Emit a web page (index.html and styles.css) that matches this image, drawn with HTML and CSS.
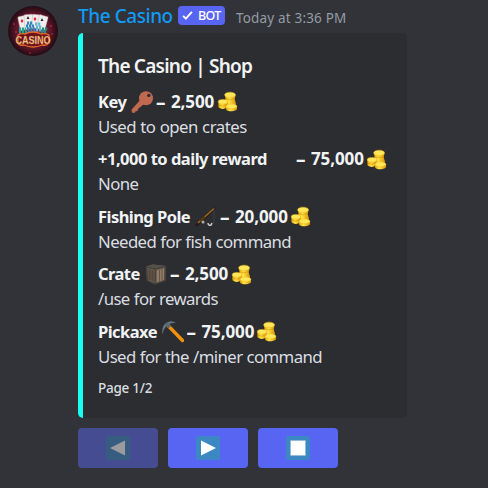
FILE: index.html
```
<!DOCTYPE html>
<html lang="en">
<head>
<meta charset="utf-8">
<title>The Casino</title>
<link rel="stylesheet" href="styles.css">
</head>
<body>
<svg class="defs" aria-hidden="true">
  <defs>
    <linearGradient id="gold" x1="0" x2="1">
      <stop offset="0" stop-color="#e7a900"/><stop offset=".4" stop-color="#ffe34c"/><stop offset="1" stop-color="#d99400"/>
    </linearGradient>
    <radialGradient id="red"><stop offset="0" stop-color="#94304a"/><stop offset=".65" stop-color="#64172c"/><stop offset="1" stop-color="#210b14"/></radialGradient>
    <symbol id="coins" viewBox="0 0 22 22">
      <g fill="url(#gold)">
        <path d="M8 4.500l1 3-.5 6c1 2 10 2 11.500 0l-1.500-5 1-4z"/>
        <path d="M1.500 11.500v5c1 3 8 3 9.500 0v-5z"/>
        <path d="M9.500 16v3c1 3 9 3 11.500 0v-3z"/>
      </g>
      <g fill="#ffe759" stroke="#eeb91c" stroke-width=".5">
        <ellipse cx="13.700" cy="4" rx="5.700" ry="2.800"/>
        <ellipse cx="6.200" cy="11.300" rx="4.900" ry="2.400"/>
        <ellipse cx="15.200" cy="16" rx="5.600" ry="2.500"/>
      </g>
      <path d="M9 8q5 2.500 9 0M2 14.700q4 2.500 8 0" fill="none" stroke="#d79a05" stroke-width=".7"/>
    </symbol>
  </defs>
</svg>
<main class="message">
  <svg class="avatar" viewBox="0 0 50 50">
    <circle cx="25" cy="25" r="25" fill="url(#red)"/>
    <g fill="#d33d51"><circle cx="6" cy="18" r=".8"/><circle cx="8" cy="26" r=".7"/><circle cx="43" cy="20" r=".8"/><circle cx="40" cy="10" r=".6"/><circle cx="22" cy="47" r=".7"/><circle cx="44" cy="28" r=".7"/></g>
    <g fill="#f3eeee" stroke="#b5a5aa" stroke-width=".4">
      <rect x="11" y="10" width="9" height="14" rx="1" transform="rotate(-12 15 17)"/>
      <rect x="16.500" y="8.500" width="9" height="14" rx="1" transform="rotate(-4 21 16)"/>
      <rect x="24" y="8.500" width="9" height="14" rx="1" transform="rotate(5 28 16)"/>
      <rect x="29.500" y="9.500" width="9" height="14" rx="1" transform="rotate(15 34 17)"/>
    </g>
    <path d="M14 13l1.500 2-1.500 2-1.500-2zM27 11l1.500 2-1.500 2-1.500-2z" fill="#dc2637"/>
    <path d="M20 10l1.500 3h-3zM34 12l1.500 3h-3z" fill="#292936"/>
    <g fill="none" stroke-width="2.800" stroke-dasharray="2.200 .8">
      <path d="M11 23h7M11 26h8" stroke="#21a58d"/><path d="M19 17h6M18 20h8M19 23h9M20 26h8" stroke="#3585bd"/><path d="M27 18h6M28 21h6M28 24h8" stroke="#69b7d2"/><path d="M34 23h6M33 26h6" stroke="#278a80"/>
    </g>
    <path d="M10 29q3-2 7-1 8-4 16 0 4-1 8 1v8q-2 3-7 2-9 4-18 0-5 1-6-2z" fill="#6b111b" stroke="#e36b29" stroke-width="1.300"/>
    <text class="logo-text" x="25" y="37.500" text-anchor="middle" textLength="35" lengthAdjust="spacingAndGlyphs">CASINO</text>
  </svg>
  <section class="content">
    <header class="byline">
      <span class="author">The Casino</span>
      <span class="badge"><svg viewBox="0 0 10 10"><path d="M1 5.300l2.500 2.500L9 1.800" fill="none" stroke="#fff" stroke-width="1.700"/></svg><span>BOT</span></span>
      <time>Today at 3:36 PM</time>
    </header>
    <article class="embed">
      <h1>The Casino | Shop</h1>
      <div class="field">
        <h2><span class="name key">Key</span>
          <svg class="emoji" viewBox="0 0 22 22"><circle cx="15" cy="7.300" r="7" fill="#c1694f"/><path d="M10 8l4 4-7 6-.500 2-2 .300-.500 1.500H1l-.500-3z" fill="#c1694f"/><circle cx="17.800" cy="4.400" r="1.700" fill="#2b2d31"/></svg>
          <span class="dash">–</span><span class="price small">2,500</span><svg class="coins"><use href="#coins"/></svg></h2>
        <p class="open">Used to open crates</p>
      </div>
      <div class="field">
        <h2><span class="name daily">+1,000 to daily reward</span><span class="emoji"></span><span class="dash">–</span><span class="price">75,000</span><svg class="coins"><use href="#coins"/></svg></h2>
        <p>None</p>
      </div>
      <div class="field">
        <h2><span class="name pole">Fishing Pole</span>
          <svg class="emoji" viewBox="0 0 22 22"><path d="M1 20L20 2" stroke="#2a1b14" stroke-width="2.500"/><path d="M3 17L19 2.500" stroke="#a16b20" stroke-width="1.500"/><path d="M5 15l5-4" stroke="#573617" stroke-width="2.500"/><path d="M19 2v12q0 5-3 5" fill="none" stroke="#4b4f54" stroke-width=".6"/><path d="M13 17q0 3 3 2l1-2" fill="none" stroke="#d2d5d7" stroke-width="1.400"/><circle cx="8" cy="16" r="1.600" fill="#aaa9a5"/></svg>
          <span class="dash">–</span><span class="price">20,000</span><svg class="coins"><use href="#coins"/></svg></h2>
        <p>Needed for fish command</p>
      </div>
      <div class="field">
        <h2><span class="name crate">Crate</span>
          <svg class="emoji" viewBox="0 0 22 22"><path d="M1 3.500L8 1.500l13 1.500-.700 14.500L10 21l-8-3.500z" fill="#6f5f50"/><path d="M1 3.500L8 1.500l13 1.500-10.500 2.500z" fill="#55514b"/><path d="M2.500 6l7 1.500V19L3 16.500z" fill="#5f5144"/><path d="M12 7.500L19 5.500v11L12 19z" fill="#927b65"/><path d="M5 6v11M7.500 7v11M14.500 7v11M17 6v11" stroke="#4d443c" stroke-width=".7"/><path d="M1.500 4L2.500 17.500 10 21l10-3.500L20.500 3.500 10.500 6zM10.500 6L10 20.500" fill="none" stroke="#44413e" stroke-width="1.300"/></svg>
          <span class="dash">–</span><span class="price small">2,500</span><svg class="coins"><use href="#coins"/></svg></h2>
        <p>/use for rewards</p>
      </div>
      <div class="field">
        <h2><span class="name pick">Pickaxe</span>
          <svg class="emoji" viewBox="0 0 22 22"><path d="M6 4.500L20.500 19.500" stroke="#f4900c" stroke-width="3.400" stroke-linecap="round"/><path d="M.500 13.500Q-.500 5 4 2 9-1.500 14 1.800 7 2 4 5.500 1 9 .500 13.500z" fill="#66757f"/><path d="M3.500 3.500l2-2 3.500 3.500-2.500 2.500z" fill="#546875"/></svg>
          <span class="dash">–</span><span class="price">75,000</span><svg class="coins"><use href="#coins"/></svg></h2>
        <p>Used for the /miner command</p>
      </div>
      <footer>Page 1/2</footer>
    </article>
    <div class="actions">
      <button class="disabled" disabled aria-label="Previous"><svg viewBox="0 0 24 24"><rect width="24" height="24" rx="2.500" fill="#365d80"/><path d="M4 12l15-7.500v15z" fill="#999b9f"/></svg></button>
      <button aria-label="Next"><svg viewBox="0 0 24 24"><rect width="24" height="24" rx="2.500" fill="#3b88c3"/><path d="M20 12L5 4.500v15z" fill="#fff"/></svg></button>
      <button aria-label="Stop"><svg viewBox="0 0 24 24"><rect width="24" height="24" rx="2.500" fill="#3b88c3"/><path d="M4.500 4.500h15v15h-15z" fill="#fff" stroke="#8dbce0" stroke-width=".7"/></svg></button>
    </div>
  </section>
</main>
</body>
</html>
```
FILE: styles.css
```
* { box-sizing: border-box; }
body { margin: 0; height: 488px; overflow: hidden; background: #313338; font-family: "Noto Sans", "Open Sans", sans-serif; }
.defs { position: absolute; width: 0; height: 0; }
.message { display: flex; gap: 20px; padding: 6px 0 0 8px; }
.avatar { width: 50px; height: 50px; flex: none; }
.logo-text { font: 900 11px "Liberation Sans", sans-serif; fill: #ffe0a4; stroke: #b44e2b; stroke-width: .4px; }
.content { width: 329px; }
.byline { display: flex; height: 27px; align-items: flex-start; white-space: nowrap; }
.author { width: 100px; line-height: 21px; font-size: 19px; font-weight: 500; color: #129af5; letter-spacing: -.45px; }
.badge { display: flex; align-items: center; width: 47px; height: 19px; padding-left: 4px; gap: 5px; border-radius: 4px; background: #5865f2; color: #fff; font-size: 12.5px; font-weight: 500; letter-spacing: -.7px; line-height: 18px; }
.badge svg { width: 11px; height: 11px; }
time { margin-left: 11px; line-height: 24px; font-size: 13.5px; letter-spacing: .17px; color: #949ba4; }
.embed { height: 385px; padding: 21px 0 0 15px; border-left: 5px solid #19fff0; border-radius: 5px; background: #2b2d31; }
h1 { margin: 0 0 11px; font-size: 19px; line-height: 25px; font-weight: 650; color: #f2f3f5; letter-spacing: -.74px; word-spacing: -.2px; white-space: nowrap; }
.field { height: 47.5px; margin-bottom: 10px; }
h2 { display: flex; align-items: center; height: 23px; margin: 0 0 2.5px; font-size: 16.5px; line-height: 22px; font-weight: 700; color: #f2f3f5; white-space: nowrap; letter-spacing: -.55px; }
p { margin: 0; font-size: 16.8px; line-height: 22.5px; color: #dbdee1; white-space: nowrap; letter-spacing: -.6px; word-spacing: .3px; }
.open { letter-spacing: -.5px; }
.name { flex: none; }
.key { width: 33px; }
.daily { width: 173px; letter-spacing: -.5px; }
.pole { width: 97px; }
.crate { width: 47px; }
.pick { width: 63.5px; }
.emoji { flex: none; width: 22px; height: 22px; }
.dash { flex: none; width: 18px; padding-left: 3px; font-size: 19px; }
.price { flex: none; width: 54px; font-size: 17px; letter-spacing: -.1px; }
.small { width: 45px; }
.coins { flex: none; width: 21px; height: 21px; margin-left: .5px; }
footer { font-size: 13.5px; line-height: 20px; font-weight: 500; color: #dbdee1; letter-spacing: -.25px; }
.actions { display: flex; gap: 10px; margin-top: 10px; }
button { display: flex; align-items: center; justify-content: center; width: 80px; height: 40px; padding: 0; border: 0; border-radius: 4px; background: #5865f2; }
button svg { width: 24px; height: 24px; }
.disabled { background: #454c92; }
```
